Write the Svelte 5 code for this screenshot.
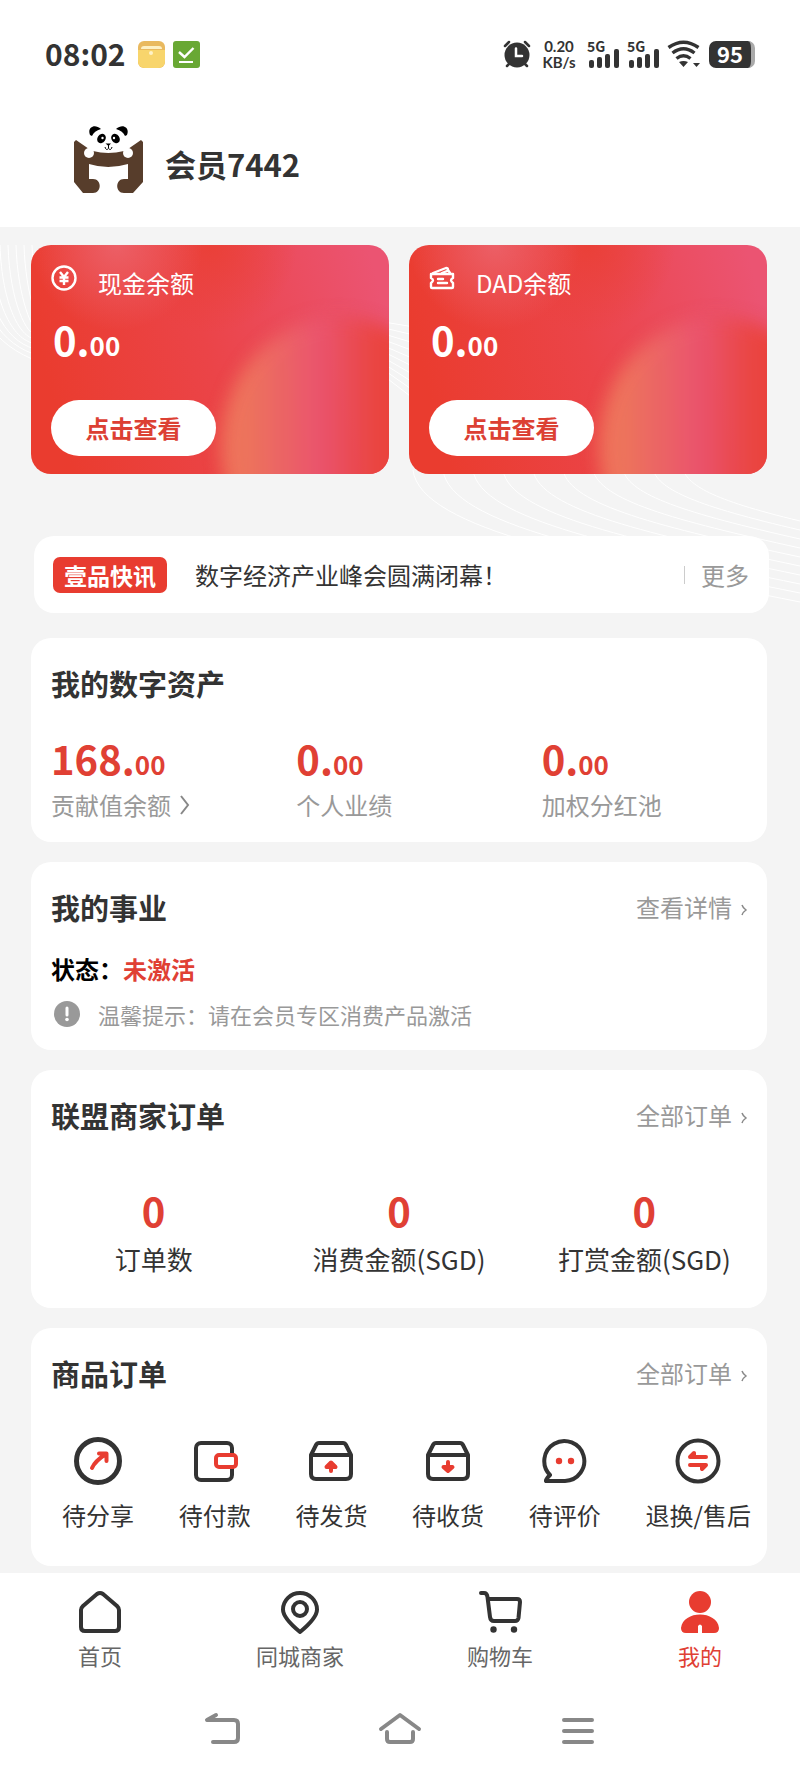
<script>
    const wallets = [
        { name: "现金余额", icon: "yuan" },
        { name: "DAD余额", icon: "ticket" },
    ]

    const assets = [
        { label: "贡献值余额", whole: "168", more: true },
        { label: "个人业绩", whole: "0" },
        { label: "加权分红池", whole: "0" },
    ]

    const merchantStats = ["订单数", "消费金额(SGD)", "打赏金额(SGD)"]

    const orders = [
        { label: "待分享", icon: "share" },
        { label: "待付款", icon: "wallet" },
        { label: "待发货", icon: "send" },
        { label: "待收货", icon: "receive" },
        { label: "待评价", icon: "comment" },
        { label: "退换/售后", icon: "refund" },
    ]

    const tabs = [
        { label: "首页", icon: "home" },
        { label: "同城商家", icon: "pin" },
        { label: "购物车", icon: "cart" },
        { label: "我的", icon: "me" },
    ]
    let activeTab = $state("me")

    // Decorative lines behind the cards
    const leftLines = [0, 1, 2, 3, 4, 5, 6, 7, 8]
    const rightLines = [0, 1, 2, 3, 4, 5, 6, 7, 8, 9]
</script>

{#snippet signal()}
    <div class="signal">
        <span>5G</span>
        <svg width="32" height="20" viewBox="0 0 32 20" fill="#333">
            <rect x="2" y="12" width="5" height="8" rx="2" />
            <rect x="10" y="9" width="5" height="11" rx="2" />
            <rect x="18" y="6" width="5" height="14" rx="2" />
            <rect x="27" y="1" width="5" height="19" rx="2" />
        </svg>
    </div>
{/snippet}

{#snippet smallArrow()}
    <svg width="6" height="12" viewBox="0 0 6 12" fill="none" stroke="#888" stroke-width="1.500">
        <path d="M1 1Q2 4 5 6Q2 8 1 11" />
    </svg>
{/snippet}

<div class="page">
    <header>
        <div class="status">
            <span class="clock">08:02</span>
            <svg width="27" height="27" viewBox="0 0 27 27">
                <rect width="27" height="27" rx="6" fill="#e9b95f" />
                <path d="M0 9H27V20Q27 27 20 27H7Q0 27 0 20Z" fill="#f8d56c" />
                <path d="M3 8Q3 5 6 5H21Q24 5 24 8Z" fill="#fdf0c4" />
                <circle cx="13" cy="12" r="2" fill="#fff3c8" />
            </svg>
            <svg width="27" height="27" viewBox="0 0 27 27" fill="none" stroke="#fff" stroke-width="2.4">
                <rect width="27" height="27" rx="3" fill="#69a834" stroke="none" />
                <path d="M6 11L11.500 16L20.500 7" />
                <path d="M6 21H20" stroke-width="2" />
            </svg>
            <div class="indicators">
                <svg width="28" height="28" viewBox="0 0 28 28" fill="none" stroke="#333" stroke-linecap="round">
                    <circle cx="14" cy="15" r="12.500" fill="#333" stroke="none" />
                    <path d="M2 6L6 2M26 6L22 2M4 26L7 23M24 26L21 23" stroke-width="2.500" />
                    <path d="M13 8.500V16H19" stroke="#fff" stroke-width="2.500" />
                </svg>
                <div class="speed">
                    <span>0.20</span>
                    <span>KB/s</span>
                </div>
                {@render signal()}
                {@render signal()}
                <svg width="34" height="28" viewBox="0 0 34 28" fill="none" stroke="#333" stroke-width="3.400">
                    <path d="M1.500 7.500Q16.500-3 31.500 7.500" />
                    <path d="M5.500 13Q16.500 4.500 27.500 13" />
                    <path d="M9.500 18.500Q16.500 13 23.500 18.500" />
                    <path d="M12 22Q16.500 20 21 22L16.500 27ZM26 23H33L29.500 27Z" fill="#333" stroke="none" />
                </svg>
                <div class="battery">95</div>
            </div>
        </div>
        <div class="profile">
            <svg width="69" height="69" viewBox="0 0 69 69">
                <path
                    d="M0 17L2 15L15 24L19 26Q34 30 50 26L54 24L67 15L69 17V57L59 68H50C41 68 41 54 50 54H54V39Q34 45 15 39V54H19C28 54 28 68 19 68H9L0 57Z"
                    fill="#573d2b"
                />
                <circle cx="15" cy="28" r="5" fill="#fff" />
                <circle cx="54" cy="28" r="5" fill="#fff" />
                <path d="M16 10C13 3 20-2 27 4Q20 6 18 11ZM53 10C56 3 49-2 42 4Q49 6 51 11Z" />
                <ellipse cx="27.500" cy="13.500" rx="4" ry="5" transform="rotate(35 27.500 13.500)" />
                <ellipse cx="41.500" cy="13.500" rx="4" ry="5" transform="rotate(-35 41.500 13.500)" />
                <circle cx="28.500" cy="13" r="1.200" fill="#fff" />
                <circle cx="40" cy="13" r="1.200" fill="#fff" />
                <path d="M31.500 18.500H37L34.500 21Z" />
                <path d="M34.500 20V23M31 22Q32 26 34.500 23.500Q37 26 38 22" fill="none" stroke="#000" />
            </svg>
            <h1>会员7442</h1>
        </div>
    </header>

    <main>
        <svg class="lines" viewBox="0 227 800 400" preserveAspectRatio="none" fill="none" stroke="#fff">
            {#each leftLines as i}
                <path d="M{i * 8 - 32} 245C{i * 8 - 30} 310 {i * 8 - 8} 345 40 {362 - i * 6}" />
            {/each}
            {#each rightLines as i}
                <path d="M384 {322 + i * 6}L414 {327 + i * 8}" />
                <path d="M{413 + i * 30} 470C{420 + i * 30} {530 - i * 5} {600 + i * 12} {562 - i * 7} 800 {602 - i * 9}" />
            {/each}
        </svg>

        <div class="wallets">
            {#each wallets as wallet}
                <section class="wallet">
                    <div class="wallet_name">
                        {#if wallet.icon === "yuan"}
                            <svg width="26" height="26" viewBox="0 0 26 26" fill="none" stroke="#fff" stroke-width="2.400">
                                <circle cx="13" cy="13" r="11.500" />
                                <path d="M9 7L13 12L17 7M13 12V20M8.500 12.500H17.500M8.500 16H17.500" />
                            </svg>
                        {:else}
                            <svg width="26" height="26" viewBox="0 0 26 26" fill="none" stroke="#fff" stroke-width="2.400" stroke-linejoin="round" stroke-linecap="round">
                                <path d="M2 9H24V13Q20 15 24 18V22Q24 23 23 23H3Q2 23 2 22V18Q6 15 2 13Z" />
                                <path d="M4 8L17 3Q19 3 19 5L21 8M13 8L18 6" />
                                <path d="M9 14H14M9 18H18" />
                            </svg>
                        {/if}
                        <span>{wallet.name}</span>
                    </div>
                    <p class="amount">0.<small>00</small></p>
                    <button class="check">点击查看</button>
                </section>
            {/each}
        </div>

        <section class="news">
            <strong>壹品快讯</strong>
            <span>数字经济产业峰会圆满闭幕！</span>
            <a href="#news">更多</a>
        </section>

        <section class="card assets">
            <div class="card_head">
                <h2>我的数字资产</h2>
            </div>
            <div class="columns">
                {#each assets as asset}
                    <div>
                        <p class="amount">{asset.whole}.<small>00</small></p>
                        <p class="asset_label">
                            {asset.label}
                            {#if asset.more}
                                <svg width="10" height="20" viewBox="0 0 10 20" fill="none" stroke="#888" stroke-width="2">
                                    <path d="M1 1L8 10L1 19" />
                                </svg>
                            {/if}
                        </p>
                    </div>
                {/each}
            </div>
        </section>

        <section class="card career">
            <div class="card_head">
                <h2>我的事业</h2>
                <a href="#career">查看详情 {@render smallArrow()}</a>
            </div>
            <p class="state">状态：<span>未激活</span></p>
            <p class="tip">
                <svg width="26" height="26" viewBox="0 0 26 26">
                    <circle cx="13" cy="13" r="13" fill="#999" />
                    <path d="M13 7V14" stroke="#fff" stroke-width="3" stroke-linecap="round" />
                    <circle cx="13" cy="18.500" r="1.800" fill="#fff" />
                </svg>
                温馨提示：请在会员专区消费产品激活
            </p>
        </section>

        <section class="card merchant">
            <div class="card_head">
                <h2>联盟商家订单</h2>
                <a href="#merchant-orders">全部订单 {@render smallArrow()}</a>
            </div>
            <div class="columns">
                {#each merchantStats as stat}
                    <div>
                        <p class="amount">0</p>
                        <p class="stat_label">{stat}</p>
                    </div>
                {/each}
            </div>
        </section>

        <section class="card goods">
            <div class="card_head">
                <h2>商品订单</h2>
                <a href="#orders">全部订单 {@render smallArrow()}</a>
            </div>
            <div class="orders">
                {#each orders as order}
                    <a href="#{order.icon}">
                        <svg width="48" height="48" viewBox="0 0 48 48" fill="none" stroke="#333" stroke-width="4" stroke-linecap="round" stroke-linejoin="round">
                            {#if order.icon === "share"}
                                <circle cx="24" cy="24" r="21.500" stroke-width="5" />
                                <path d="M18 31Q21 24 32 17M25 16.500H32.500V24" stroke="#e83c30" />
                            {:else if order.icon === "wallet"}
                                <rect x="5" y="6" width="36" height="37" rx="5" />
                                <rect x="25" y="18" width="20" height="12" rx="3" fill="#fff" stroke="#e83c30" />
                            {:else if order.icon === "send" || order.icon === "receive"}
                                <path d="M4 18L9 8Q10 6 12 6H36Q38 6 39 8L44 18V37Q44 42 39 42H9Q4 42 4 37ZM4 18H44" />
                                {#if order.icon === "send"}
                                    <path d="M24 34V27M19.500 30L24 25.500L28.500 30Z" stroke="#e83c30" fill="#e83c30" />
                                {:else}
                                    <path d="M24 25V32M19.500 30L24 34L28.500 30Z" stroke="#e83c30" fill="#e83c30" />
                                {/if}
                            {:else if order.icon === "comment"}
                                <path d="M9 38A20 20 0 1 1 24 44H5Q4 43 9 38Z" />
                                <g fill="#e83c30" stroke="none">
                                    <circle cx="18" cy="24" r="3.200" />
                                    <circle cx="30" cy="24" r="3.200" />
                                </g>
                            {:else}
                                <circle cx="24" cy="24" r="20.500" />
                                <path d="M32 20H16L20 16V20M16 28H32L28 32V28" stroke="#e83c30" fill="#e83c30" />
                            {/if}
                        </svg>
                        <span>{order.label}</span>
                    </a>
                {/each}
            </div>
        </section>
    </main>

    <footer>
        <nav class="tabs">
            {#each tabs as tab}
                <button class:active={activeTab === tab.icon} onclick={() => (activeTab = tab.icon)}>
                    <svg width="44" height="44" viewBox="0 0 44 44" fill="none" stroke="#333" stroke-width="4" stroke-linecap="round" stroke-linejoin="round">
                        {#if tab.icon === "home"}
                            <path d="M3 20Q3 18 5 16L19 4Q22 2 25 4L39 16Q41 18 41 20V37Q41 41 37 41H7Q3 41 3 37Z" />
                        {:else if tab.icon === "pin"}
                            <path d="M22 42Q5 28 5 19.500A17 16.500 0 0 1 39 19.500Q39 28 22 42Z" />
                            <circle cx="22" cy="19" r="7" />
                        {:else if tab.icon === "cart"}
                            <path d="M3 3H6Q9 3 9.500 7L12 27Q12.500 31 16 31H37Q40 31 40.500 28L42 12Q42 9 39 9H11" />
                            <g fill="#333" stroke="none">
                                <circle cx="15.500" cy="39.500" r="3.200" />
                                <circle cx="36" cy="39.500" r="3.200" />
                            </g>
                        {:else}
                            <g fill="#e83c30" stroke="none">
                                <circle cx="22" cy="12" r="11" />
                                <path d="M24 43V36Q22 33 20 36V43H8Q3 43 3 38C5 20 39 20 41 38Q41 43 36 43Z" />
                            </g>
                        {/if}
                    </svg>
                    <span>{tab.label}</span>
                </button>
            {/each}
        </nav>
        <div class="system_nav">
            <button aria-label="返回">
                <svg width="36" height="36" viewBox="0 0 36 36" fill="none" stroke="#888" stroke-width="4" stroke-linecap="round" stroke-linejoin="round">
                    <path d="M12 3L3 8H30Q34 8 34 12V26Q34 30 30 30H9" />
                </svg>
            </button>
            <button aria-label="主页">
                <svg width="44" height="36" viewBox="0 0 44 36" fill="none" stroke="#888" stroke-width="4" stroke-linecap="round" stroke-linejoin="round">
                    <path d="M3 17L22 3L41 17M9 20V27Q9 30 12 30H32Q35 30 35 27V20" />
                </svg>
            </button>
            <button aria-label="最近任务">
                <svg width="36" height="36" viewBox="0 0 36 36" fill="none" stroke="#888" stroke-width="4" stroke-linecap="round">
                    <path d="M4 8H32M4 19H32M4 30H32" />
                </svg>
            </button>
        </div>
    </footer>
</div>

<style>
    :global(body) {
        margin: 0;
        background: #f4f4f4;
    }
    .page {
        font-family: "Noto Sans CJK SC", "Noto Sans", sans-serif;
        font-size: 24px;
        line-height: 36px;
        color: #333;
    }
    h1, h2, p {
        margin: 0;
    }
    a {
        color: inherit;
        text-decoration: none;
    }
    button {
        border: 0;
        padding: 0;
        background: none;
        font: inherit;
        color: inherit;
        cursor: pointer;
    }
    svg {
        display: block;
        flex: none;
    }

    header {
        background: #fff;
        padding-bottom: 33px;
    }
    .status {
        display: flex;
        align-items: center;
        gap: 8px;
        height: 108px;
        padding: 0 45px;
    }
    .clock {
        font-size: 30px;
        font-weight: 700;
        margin: 0 4px 3px 0;
    }
    .indicators {
        display: flex;
        align-items: center;
        gap: 8px;
        margin-left: auto;
    }
    .speed {
        display: flex;
        flex-direction: column;
        align-items: center;
        width: 40px;
        font-family: Lato, sans-serif;
        font-size: 15px;
        font-weight: 700;
        line-height: 16px;
    }
    .signal {
        display: flex;
        flex-direction: column;
        height: 28px;
        font-size: 14px;
        font-weight: 700;
        line-height: 12px;
    }
    .signal svg {
        margin-top: -4px;
    }
    .battery {
        width: 42px;
        height: 27px;
        border-radius: 7px;
        border-right: 4px solid #aaa;
        background: #333;
        color: #fff;
        font-size: 22px;
        font-weight: 700;
        line-height: 25px;
        text-align: center;
    }
    .profile {
        display: flex;
        align-items: flex-end;
        gap: 22px;
        padding: 17px 74px 0;
    }
    h1 {
        font-size: 31px;
        font-weight: 700;
        line-height: 60px;
    }

    main {
        position: relative;
        padding: 18px 33px 7px 31px;
    }
    .lines {
        position: absolute;
        top: 0;
        left: 0;
        width: 100%;
        height: 400px;
    }
    .wallets {
        position: relative;
        display: grid;
        grid-template-columns: 1fr 1fr;
        gap: 20px;
        margin-bottom: 62px;
    }
    .wallet {
        position: relative;
        overflow: hidden;
        padding: 20px 20px 18px;
        border-radius: 20px;
        background:
            radial-gradient(circle at 24% 0, #ec5f66 0, transparent 24%),
            radial-gradient(circle at 50% 0, #ea4038 0, transparent 30%),
            linear-gradient(75deg, #ea3c2f 10%, #eb4448 50%, #eb5472 95%);
        color: #fff;
    }
    /* soft glowing ball in the corner */
    .wallet::before {
        content: "";
        position: absolute;
        top: 72px;
        left: 190px;
        width: 236px;
        height: 260px;
        border-radius: 50%;
        background: linear-gradient(90deg, #ee7a5e 10%, #ea5570 42%, #ea4238 68%);
        filter: blur(9px);
        opacity: 0.9;
    }
    .wallet_name {
        display: flex;
        gap: 21px;
    }
    .amount {
        font-size: 40px;
        font-weight: 700;
        line-height: 48px;
    }
    .amount small {
        font-size: 26px;
        line-height: 26px;
    }
    .wallet .amount {
        margin: 14px 0 37px 2px;
    }
    .check {
        display: block;
        position: relative;
        width: 165px;
        height: 56px;
        border-radius: 28px;
        background: #fff;
        color: #dc4033;
        font-weight: 700;
    }

    .news {
        position: relative;
        display: flex;
        align-items: center;
        height: 77px;
        margin: 0 -2px 25px 3px;
        padding: 0 20px 0 19px;
        border-radius: 20px;
        background: #fff;
        box-sizing: border-box;
    }
    .news strong {
        padding: 0 11px;
        margin-right: 28px;
        border-radius: 7px;
        background: #e83c30;
        color: #fff;
        font-size: 23px;
        font-weight: 700;
    }
    .news a {
        display: flex;
        align-items: center;
        gap: 16px;
        margin-left: auto;
        color: #999;
    }
    .news a::before {
        content: "";
        width: 1px;
        height: 18px;
        background: #ccc;
    }

    .card {
        position: relative;
        padding-top: 25px;
        border-radius: 20px;
        background: #fff;
    }
    .card + .card {
        margin-top: 20px;
    }
    .card_head {
        display: flex;
        justify-content: space-between;
        align-items: center;
        padding: 0 20px;
    }
    h2 {
        font-size: 29px;
        font-weight: 700;
        line-height: 40px;
    }
    .card_head a {
        display: flex;
        align-items: center;
        gap: 9px;
        color: #999;
    }
    .card_head a svg {
        margin-top: 6px;
    }
    .columns {
        display: grid;
        grid-template-columns: repeat(3, 1fr);
    }
    .card .amount {
        color: #e04034;
    }

    .assets {
        padding-bottom: 19px;
    }
    .assets .columns {
        margin-top: 31px;
    }
    .assets .columns > div {
        padding-left: 20px;
    }
    .asset_label {
        display: flex;
        align-items: center;
        gap: 9px;
        margin-top: 5px;
        color: #999;
    }

    .career {
        padding-bottom: 18px;
    }
    .state {
        margin-top: 24px;
        padding-left: 20px;
        color: #000;
        font-weight: 700;
    }
    .state span {
        color: #e04034;
    }
    .tip {
        display: flex;
        align-items: center;
        gap: 18px;
        margin-top: 9px;
        padding-left: 23px;
        color: #999;
        font-size: 22px;
    }

    .merchant {
        padding-bottom: 31px;
        text-align: center;
    }
    .merchant .columns {
        margin-top: 51px;
    }
    .stat_label {
        margin-top: 7px;
        font-size: 26px;
    }

    .goods {
        padding-bottom: 33px;
    }
    .orders {
        display: flex;
        justify-content: space-between;
        margin-top: 44px;
        padding: 0 16px 0 31px;
    }
    .orders a {
        display: flex;
        flex-direction: column;
        align-items: center;
        gap: 12px;
    }

    footer {
        background: #fff;
    }
    .tabs {
        display: grid;
        grid-template-columns: repeat(4, 1fr);
        padding-top: 17px;
    }
    .tabs button {
        display: flex;
        flex-direction: column;
        align-items: center;
        gap: 5px;
        color: #666;
        font-size: 22px;
        line-height: 32px;
    }
    .tabs .active {
        color: #e04034;
    }
    .system_nav {
        display: flex;
        justify-content: center;
        gap: 138px;
        padding: 41px 0 30px;
    }
</style>
